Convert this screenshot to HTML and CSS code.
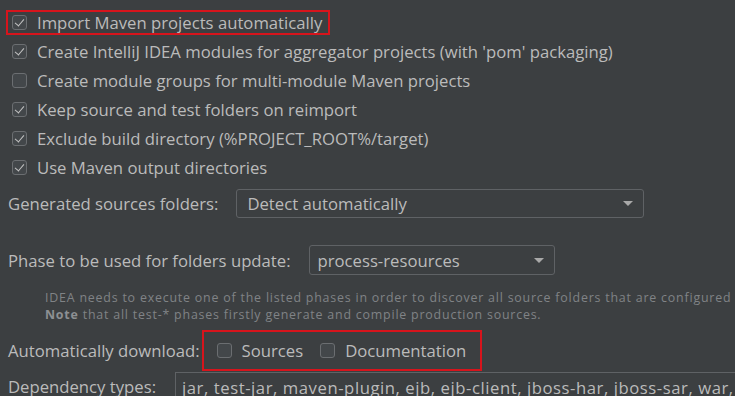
FILE: index.html
```html
<!DOCTYPE html>
<html lang="en">
<head>
  <meta charset="UTF-8" />
  <title>Maven Importing</title>
  <link rel="stylesheet" href="styles.css">
</head>
<body>
  <div class="settings">
    <div class="check-list">
      <div class="row">
        <label class="option highlight"><span class="box checked"></span>Import Maven projects automatically</label>
      </div>
      <div class="row">
        <label class="option"><span class="box checked"></span>Create IntelliJ IDEA modules for aggregator projects (with 'pom' packaging)</label>
      </div>
      <div class="row">
        <label class="option"><span class="box"></span>Create module groups for multi-module Maven projects</label>
      </div>
      <div class="row">
        <label class="option"><span class="box checked"></span>Keep source and test folders on reimport</label>
      </div>
      <div class="row">
        <label class="option"><span class="box checked"></span>Exclude build directory (%PROJECT_ROOT%/target)</label>
      </div>
      <div class="row">
        <label class="option"><span class="box checked"></span>Use Maven output directories</label>
      </div>
    </div>

    <div class="field-row generated">
      <span class="field-label">Generated sources folders:</span>
      <div class="combo combo-wide">Detect automatically<span class="arrow"></span></div>
    </div>

    <div class="field-row phase">
      <span class="field-label">Phase to be used for folders update:</span>
      <div class="combo combo-phase">process-resources<span class="arrow"></span></div>
    </div>

    <p class="hint">
      IDEA needs to execute one of the listed phases in order to discover all source folders that are configured<br>
      <b>Note</b> that all test-* phases firstly generate and compile production sources.
    </p>

    <div class="field-row download">
      <span class="field-label">Automatically download:</span>
      <div class="download-box">
        <label class="inline-option"><span class="box"></span>Sources</label>
        <label class="inline-option"><span class="box"></span>Documentation</label>
      </div>
    </div>

    <div class="field-row deps">
      <span class="field-label">Dependency types:</span>
      <div class="text-field">jar, test-jar, maven-plugin, ejb, ejb-client, jboss-har, jboss-sar, war,</div>
    </div>
  </div>
</body>
</html>
```

FILE: styles.css
```css
body {
  margin: 0;
  background: #3c3f41;
  color: #bbbbbb;
  font-family: 'Open Sans', 'DejaVu Sans', sans-serif;
  font-size: 16.7px;
  overflow: hidden;
}

.settings {
  padding: 8px 0 0 0;
  white-space: nowrap;
}

/* checkbox rows */
.row {
  height: 29px;
  display: flex;
  align-items: center;
  padding-left: 6px;
}

.option {
  display: inline-flex;
  align-items: center;
  height: 25px;
  box-sizing: border-box;
  border: 2px solid transparent;
  padding: 0 6px 0 4px;
  gap: 10px;
}

.highlight {
  border-color: #d7141c;
}

.box {
  width: 15px;
  height: 15px;
  box-sizing: border-box;
  border: 1px solid #6b6e71;
  border-radius: 3px;
  background: #43474a;
  flex-shrink: 0;
  position: relative;
}

.box.checked::after {
  content: "";
  position: absolute;
  left: 4px;
  top: 1px;
  width: 4px;
  height: 8px;
  border: solid #c4c4c4;
  border-width: 0 1.6px 1.6px 0;
  transform: rotate(40deg);
}

/* label + control rows */
.field-row {
  display: flex;
  align-items: center;
  gap: 18px;
  padding-left: 8px;
}

.generated {
  margin-top: 7px;
}

.phase {
  margin-top: 27px;
}

.combo {
  height: 29px;
  box-sizing: border-box;
  border: 1px solid #5f6265;
  border-radius: 3px;
  display: flex;
  align-items: center;
  justify-content: space-between;
  padding: 0 10px 0 10px;
}

.combo-wide {
  width: 408px;
}

.combo-phase {
  width: 246px;
  height: 30px;
  padding-left: 8px;
}

.arrow {
  width: 0;
  height: 0;
  border-left: 5px solid transparent;
  border-right: 5px solid transparent;
  border-top: 5px solid #a9a9a9;
}

.hint {
  margin: 14px 0 0 45px;
  font-size: 12.4px;
  letter-spacing: 0.8px;
  line-height: 17px;
  color: #808386;
}

.hint b {
  color: #8d9093;
}

.download {
  margin-top: 7px;
  gap: 2px;
}

.download-box {
  display: flex;
  align-items: center;
  gap: 17px;
  height: 41px;
  box-sizing: border-box;
  border: 2px solid #d7141c;
  padding: 0 14px 0 13px;
}

.inline-option {
  display: inline-flex;
  align-items: center;
  gap: 10px;
}

.deps {
  gap: 19px;
}

.text-field {
  flex: 1;
  height: 28px;
  margin-top: 1px;
  border-top: 1px solid #5f6265;
  border-left: 1px solid #5f6265;
  padding-left: 6px;
  letter-spacing: 0.55px;
  display: flex;
  align-items: center;
}
```
